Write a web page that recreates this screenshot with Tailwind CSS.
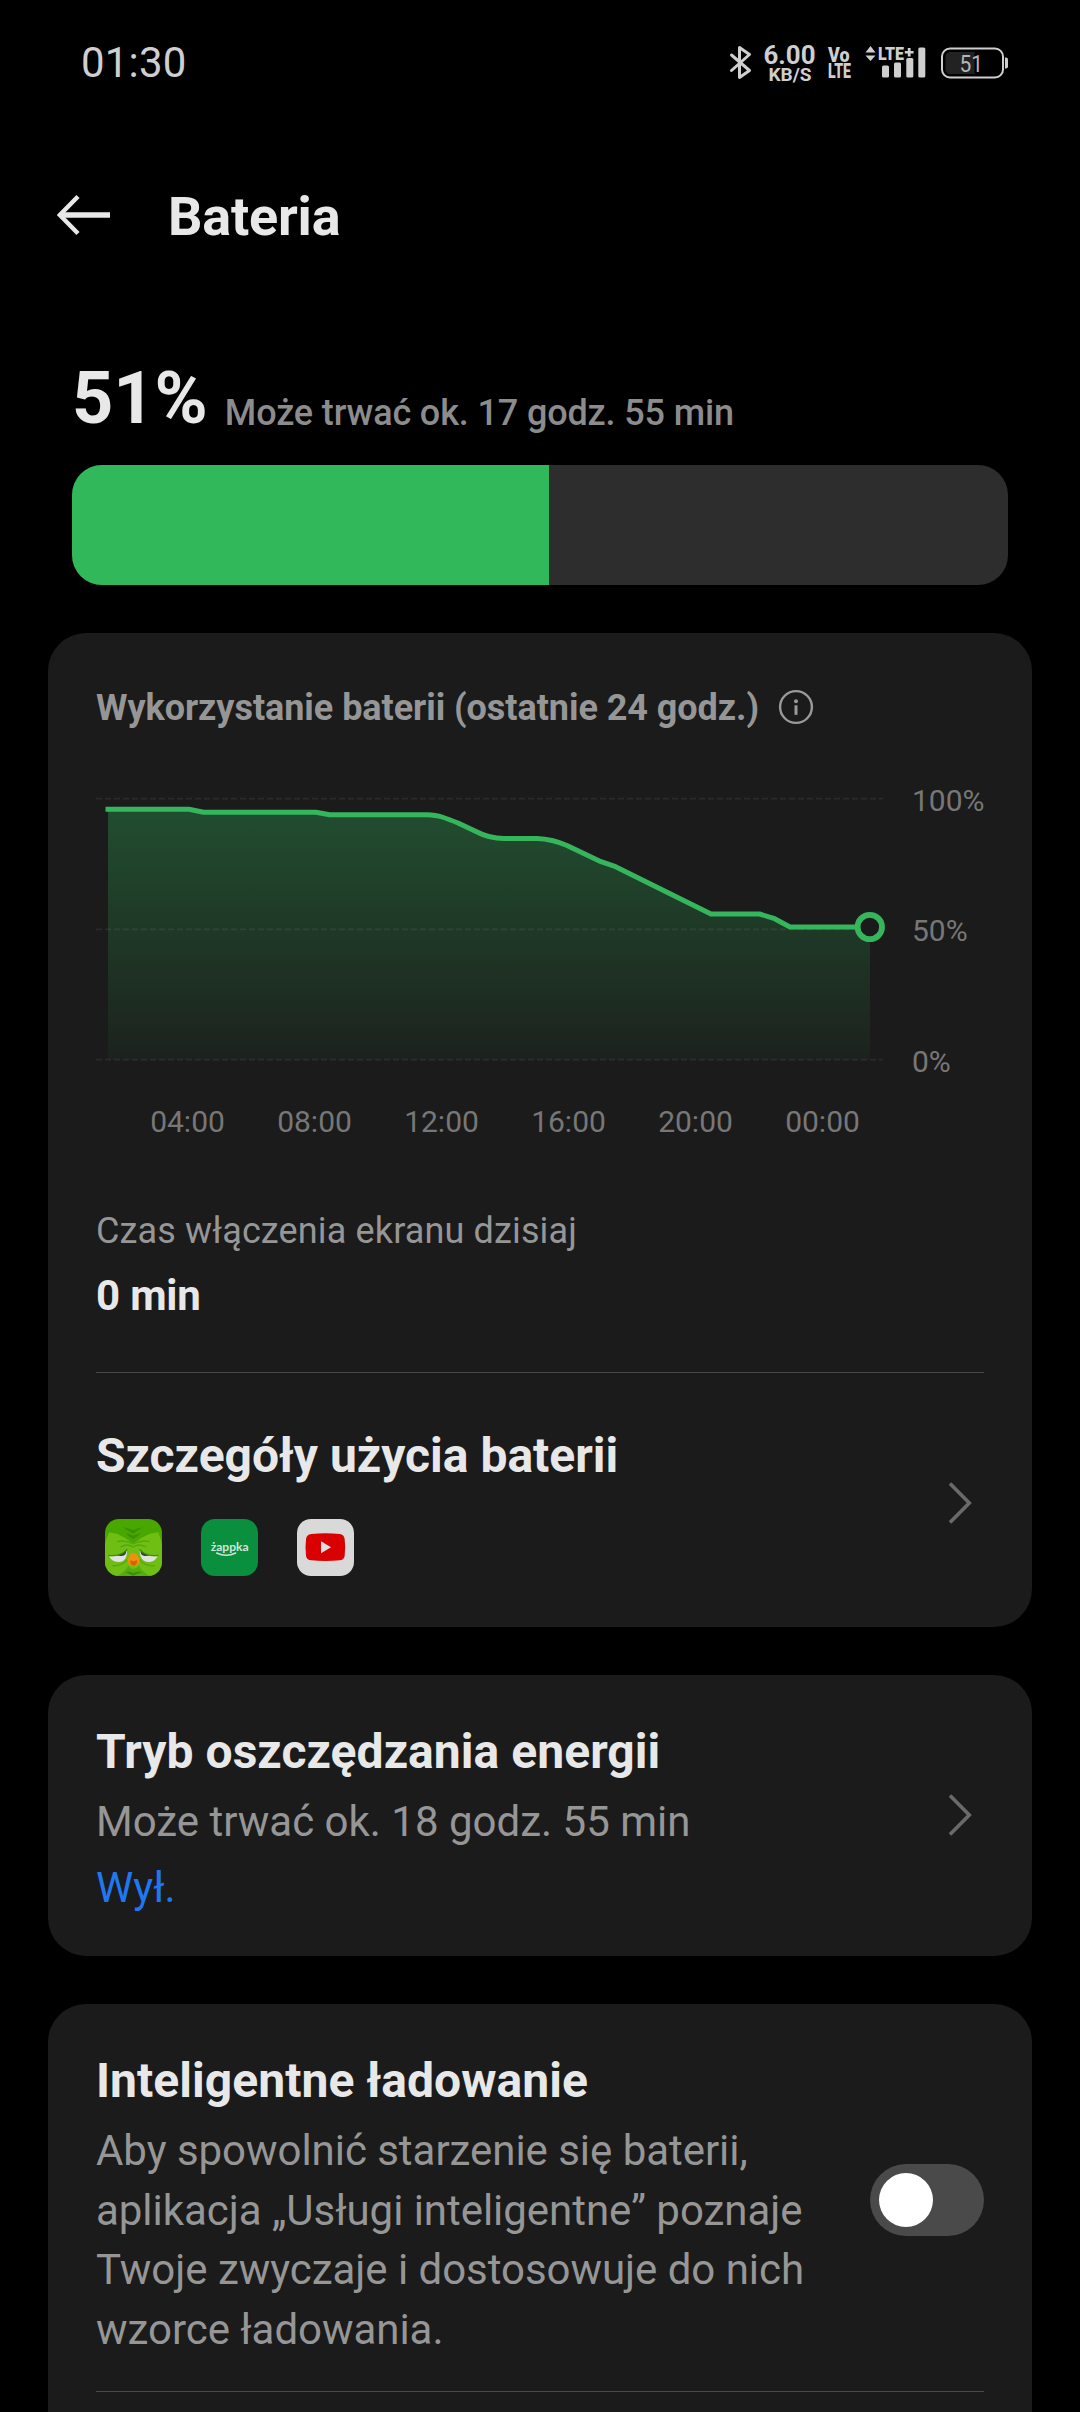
<!DOCTYPE html>
<html lang="pl">
<head>
<meta charset="utf-8">
<title>Bateria</title>
<script src="https://cdn.jsdelivr.net/npm/@tailwindcss/browser@4"></script>
</head>
<body class="bg-black">
<div class="w-[1080px] h-[2412px] overflow-hidden bg-black font-['Roboto',sans-serif] text-[#e8e8e8] flex flex-col">

  <!-- Status bar -->
  <div class="h-[125px] shrink-0 flex items-center justify-between pl-[81px] pr-[60px]">
    <span class="text-[42px] leading-[50px] tracking-[0.2px] text-[#cfcfcf]">01:30</span>
    <svg class="w-[300px] h-[50px]" viewBox="720 37.5 300 50" fill="#cfcfcf" font-family="Roboto, sans-serif">
      <path d="M731.500 54.500 L749.500 70 L739.500 77 V47 L749.500 54 L731.500 70" fill="none" stroke="#cfcfcf" stroke-width="3" stroke-linejoin="round" stroke-linecap="round"/>
      <text x="763.500" y="63.500" font-size="25" font-weight="700" textLength="52" lengthAdjust="spacingAndGlyphs">6.00</text>
      <text x="768.500" y="80.500" font-size="18.500" font-weight="700" textLength="43" lengthAdjust="spacingAndGlyphs">KB/S</text>
      <text x="828" y="61" font-size="20" font-weight="900" textLength="21.500" lengthAdjust="spacingAndGlyphs">Vo</text>
      <text x="828" y="77" font-size="20" font-weight="900" textLength="23" lengthAdjust="spacingAndGlyphs">LTE</text>
      <path d="M865.500 52 L870.500 45.500 L875.500 52 Z M865.500 55 L870.500 60.500 L875.500 55 Z"/>
      <text x="878" y="59.300" font-size="17.500" font-weight="900" textLength="26" lengthAdjust="spacingAndGlyphs">LTE</text>
      <path d="M907.800 47.500h2.800v3h3v2.600h-3v3h-2.800v-3h-3v-2.600h3z"/>
      <rect x="882" y="65" width="7" height="12" rx="1.500"/>
      <rect x="894" y="62" width="7" height="15" rx="1.500"/>
      <rect x="906.300" y="57.500" width="7" height="19.500" rx="1.500"/>
      <rect x="918.300" y="47" width="7" height="30" rx="1.500"/>
      <rect x="942" y="48" width="61" height="29" rx="8" fill="none" stroke="#cfcfcf" stroke-width="2"/>
      <path d="M950 51.500h24.500v22H950a4.500 4.500 0 0 1-4.500-4.500V56a4.500 4.500 0 0 1 4.500-4.500z" fill="#222"/>
      <path d="M1005 57h1a2 2 0 0 1 2 2v7a2 2 0 0 1-2 2h-1z"/>
      <text x="959.500" y="71" font-size="23.500" fill="#b4b4b4" textLength="23.500" lengthAdjust="spacingAndGlyphs">51</text>
    </svg>
  </div>

  <!-- App bar -->
  <div class="h-[182px] shrink-0 flex items-center pl-[57px]">
    <svg class="w-[54px] h-[42px] mb-[2px]" viewBox="0 0 54 42" fill="none" stroke="#e8e8e8" stroke-width="4.500"><path d="M21 2.500 L2.800 21 L21 39.500"/><path d="M2.800 21 H53" stroke-width="5.500"/></svg>
    <h1 class="ml-[57px] pt-[2px] text-[54px] leading-[64px] font-bold tracking-[-0.2px]">Bateria</h1>
  </div>

  <!-- Battery level -->
  <div class="shrink-0 pt-[48px] px-[72px]">
    <div class="flex items-start">
      <span class="text-[72px] leading-[88px] font-bold">51%</span>
      <span class="ml-[17px] pt-[34px] text-[36px] leading-[48px] font-medium tracking-[-0.14px] text-[#8c8c8c]">Może trwać ok. 17 godz. 55 min</span>
    </div>
    <div class="mt-[22px] h-[120px] rounded-[30px] bg-[#2d2d2d] overflow-hidden">
      <div class="h-full bg-[#30b85a]" style="width:51%"></div>
    </div>
  </div>

  <!-- Usage card -->
  <section class="mt-[48px] mx-[48px] h-[994px] shrink-0 rounded-[38px] bg-[#1b1b1b] px-[48px] flex flex-col">
    <div class="pt-[51px] flex items-center">
      <h2 class="text-[36px] leading-[48px] font-bold tracking-[-0.05px] text-[#969696]">Wykorzystanie baterii (ostatnie 24 godz.)</h2>
      <svg class="ml-[19px] mb-[3px] w-[36px] h-[36px]" viewBox="0 0 36 36" fill="#9a9a9a"><circle cx="18" cy="18" r="15.900" fill="none" stroke="#9a9a9a" stroke-width="2.400"/><circle cx="18" cy="12.300" r="2"/><path d="M16.500 16.300h3v9.500h-3z"/></svg>
    </div>
    <svg class="mt-[48px] w-[888px] h-[370px]" viewBox="96 780 888 370" font-family="Roboto, sans-serif" font-size="30" fill="#777">
      <defs><linearGradient id="area" gradientUnits="userSpaceOnUse" x1="0" y1="809" x2="0" y2="1060"><stop offset="0" stop-color="#30b85a" stop-opacity=".32"/><stop offset="1" stop-color="#30b85a" stop-opacity=".045"/></linearGradient></defs>
      <path d="M108 809.300H189L203.600 812.300H316L329.600 814.700H426.600Q436 815 442 817T458 823L475 831Q489 838.500 504 838.500H537Q552 839 567 845.500L601 861.700L615.600 866.700L711 914H759.600L774.600 918.700L790 927H870V1060H108Z" fill="url(#area)"/>
      <path d="M96 798.700H883M96 929.300H883M96 1059.700H883" stroke="#fff" stroke-opacity=".065" stroke-width="1.800" stroke-dasharray="6 3"/>
      <path d="M105.500 809.300H189L203.600 812.300H316L329.600 814.700H426.600Q436 815 442 817T458 823L475 831Q489 838.500 504 838.500H537Q552 839 567 845.500L601 861.700L615.600 866.700L711 914H759.600L774.600 918.700L790 927H858" fill="none" stroke="#35b65c" stroke-width="5" stroke-linejoin="round"/>
      <circle cx="869.800" cy="927" r="12.200" fill="#1b1b1b" stroke="#35b65c" stroke-width="5.800"/>
      <text x="912" y="811">100%</text><text x="912" y="941">50%</text><text x="912" y="1072">0%</text>
      <g text-anchor="middle"><text x="187.500" y="1132">04:00</text><text x="314.500" y="1132">08:00</text><text x="441.500" y="1132">12:00</text><text x="568.500" y="1132">16:00</text><text x="695.500" y="1132">20:00</text><text x="822.500" y="1132">00:00</text></g>
    </svg>
    <div class="mt-[57px] text-[36px] leading-[48px] tracking-[0.14px] text-[#969696]">Czas włączenia ekranu dzisiaj</div>
    <div class="mt-[13px] text-[42px] leading-[56px] font-bold tracking-[-0.2px]">0 min</div>
    <div class="mt-[48px] h-px shrink-0 bg-[#484848]"></div>
    <div class="flex items-center justify-between">
      <div class="pt-[53px]">
        <h3 class="text-[48px] leading-[60px] font-bold">Szczegóły użycia baterii</h3>
        <div class="mt-[33px] ml-[9px] flex gap-[39px]">
          <svg class="w-[57px] h-[57px] rounded-[14px]" viewBox="0 0 171 171">
            <rect width="171" height="171" fill="#48a800"/>
            <path d="M4 60L12 40L36 44Q60 54 84 74Q110 54 134 44L160 40L167 60L171 76V171H0V76Z" fill="#6fbe14"/>
            <path d="M54 25Q74 28 84 34Q96 28 114 25Q98 34 84 44Q70 36 54 25ZM62 42Q76 46 84 50Q96 46 108 42Q96 54 84 60Q70 54 62 42Z" fill="#3c8f08"/>
            <path d="M36 68Q60 62 84 75Q110 62 134 68M46 84Q68 72 84 84Q102 72 124 84M22 140Q52 142 66 122M150 140Q118 142 104 122" fill="none" stroke="#54a90c" stroke-width="4"/>
            <path d="M36 171Q60 158 70 140Q78 150 84 150Q94 150 102 140Q110 158 136 171Z" fill="#56ac0c"/>
            <path d="M60 160Q76 156 84 163Q96 156 112 160Q96 164 84 171Q72 164 60 160Z" fill="#3c8f08"/>
            <path d="M12 110Q44 118 66 92Q68 128 40 129Q18 128 12 110Z" fill="#e2e2e2"/>
            <path d="M158 110Q126 118 104 92Q104 128 132 129Q152 128 158 110Z" fill="#e2e2e2"/>
            <path d="M38 108Q54 104 64 92Q66 110 50 111Q40 112 38 108ZM132 108Q116 104 107 92Q104 108 118 111Q130 112 132 108Z" fill="#3a4040"/>
            <path d="M10 109Q46 114 67 91M160 109Q124 114 103 91" fill="none" stroke="#3c8f08" stroke-width="4"/>
            <path d="M84 102Q96 102 103 120Q106 140 86 142Q66 142 69 120Q74 102 84 102Z" fill="#f0910c"/>
            <path d="M76 123Q86 130 96 123Q98 138 86 140Q74 138 76 123Z" fill="#d8620a"/>
          </svg>
          <svg class="w-[57px] h-[57px] rounded-[14px]" viewBox="0 0 171 171">
            <rect width="171" height="171" fill="#0a8f3f"/>
            <text x="29" y="95" font-family="Lato, sans-serif" font-weight="700" font-size="33" fill="#cfe6d6" textLength="114" lengthAdjust="spacingAndGlyphs">żappka</text>
            <path d="M47 102Q76 116 104 102" fill="none" stroke="#cfe6d6" stroke-width="4.500" stroke-linecap="round"/>
          </svg>
          <svg class="w-[57px] h-[57px] rounded-[14px]" viewBox="0 0 171 171">
            <rect width="171" height="171" fill="#d9d9d9"/>
            <path d="M43 45Q85 41 128 45Q141 46 143 60Q146 84 143 110Q141 123 128 124Q85 128 43 124Q29 123 27 110Q24 84 27 60Q29 46 43 45Z" fill="#d80000"/>
            <path d="M72 67L102 85L72 103Z" fill="#e0e0e0"/>
          </svg>
        </div>
      </div>
      <svg class="mr-[12px] mt-[57px] w-[24px] h-[44px]" viewBox="0 0 24 44" fill="none" stroke="#6a6a6a" stroke-width="3.600"><path d="M2 2.500 L21.300 22 L2 41.500"/></svg>
    </div>
  </section>

  <!-- Power saving card -->
  <section class="mt-[48px] mx-[48px] h-[281px] shrink-0 rounded-[38px] bg-[#1b1b1b] px-[48px] flex items-start justify-between">
    <div class="pt-[47px]">
      <h3 class="text-[48px] leading-[60px] font-bold tracking-[0.05px]">Tryb oszczędzania energii</h3>
      <div class="mt-[12px] text-[42px] leading-[56px] text-[#969696]">Może trwać ok. 18 godz. 55 min</div>
      <div class="mt-[10px] text-[42px] leading-[56px] text-[#1f78f2]">Wył.</div>
    </div>
    <svg class="mr-[12px] mt-[118px] w-[24px] h-[44px]" viewBox="0 0 24 44" fill="none" stroke="#6a6a6a" stroke-width="3.600"><path d="M2 2.500 L21.300 22 L2 41.500"/></svg>
  </section>

  <!-- Smart charging card -->
  <section class="mt-[48px] mx-[48px] h-[460px] shrink-0 rounded-t-[38px] bg-[#1b1b1b] px-[48px]">
    <div class="flex items-start justify-between">
      <div class="pt-[47px]">
        <h3 class="text-[48px] leading-[60px] font-bold tracking-[0.05px]">Inteligentne ładowanie</h3>
        <p class="mt-[10px] text-[42px] leading-[59.500px] tracking-[-0.04px] text-[#969696]">Aby spowolnić starzenie się baterii,<br>aplikacja „Usługi inteligentne” poznaje<br>Twoje zwyczaje i dostosowuje do nich<br>wzorce ładowania.</p>
      </div>
      <div class="mt-[160px] w-[114px] h-[72px] rounded-full bg-[#4a4a4a] p-[9px]"><div class="size-[54px] rounded-full bg-white"></div></div>
    </div>
    <div class="mt-[32px] h-px bg-[#484848]"></div>
  </section>
</div>
</body>
</html>
